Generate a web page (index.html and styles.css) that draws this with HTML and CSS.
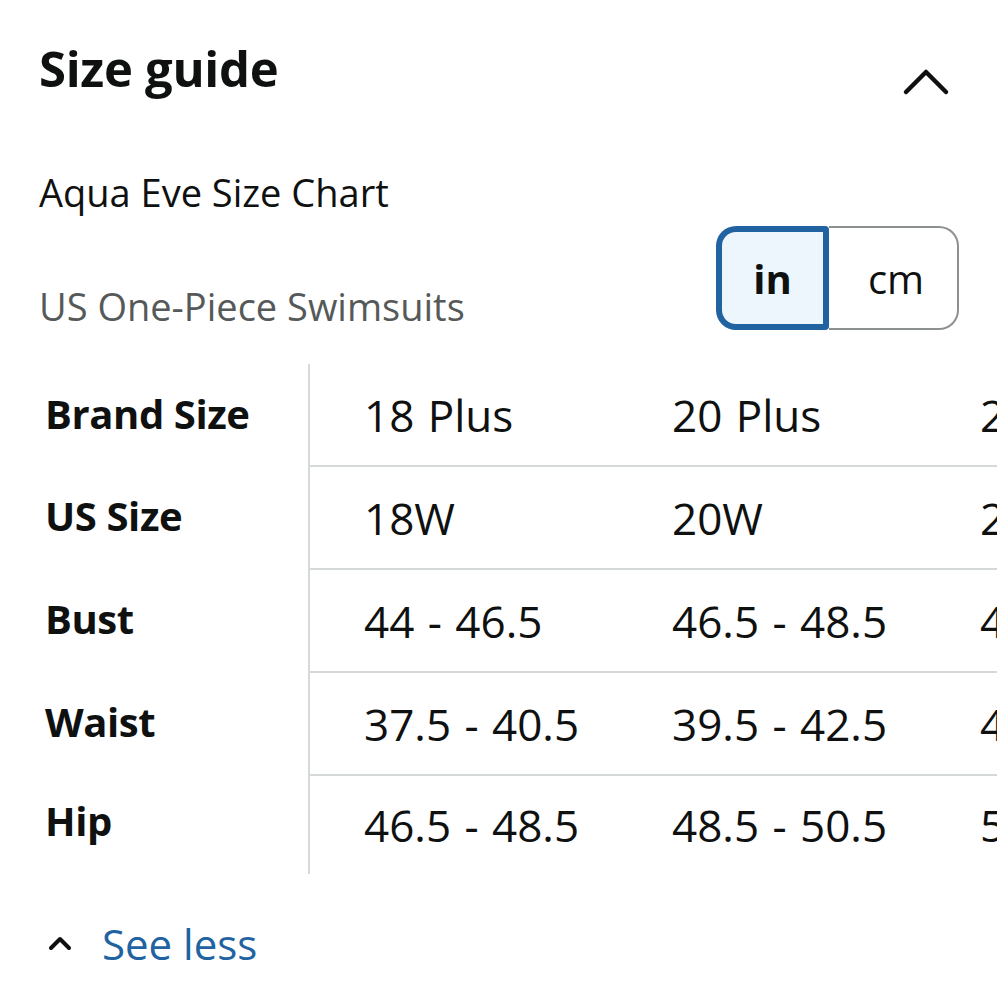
FILE: index.html
```html
<!DOCTYPE html>
<html lang="en">
<head>
<meta charset="utf-8">
<title>Size guide</title>
<link rel="stylesheet" href="styles.css">
</head>
<body>
<main class="panel">
  <header class="header">
    <h1 class="title">Size guide</h1>
    <button class="collapse" aria-label="Collapse">
      <svg width="48" height="30" viewBox="0 0 48 30"><path d="M4 25 L24 5 L44 25" fill="none" stroke="#0f1111" stroke-width="4.5" stroke-linecap="round" stroke-linejoin="round"/></svg>
    </button>
  </header>

  <p class="chart-name">Aqua Eve Size Chart</p>

  <div class="sub-row">
    <p class="subtitle">US One-Piece Swimsuits</p>
    <div class="toggle">
      <span class="seg seg-active">in</span>
      <span class="seg seg-off">cm</span>
    </div>
  </div>

  <div class="table-wrap">
    <div class="table">
      <div class="labels">
        <div class="lab">Brand Size</div>
        <div class="lab">US Size</div>
        <div class="lab">Bust</div>
        <div class="lab">Waist</div>
        <div class="lab">Hip</div>
      </div>
      <div class="data">
        <div class="row"><span class="cell">18 Plus</span><span class="cell">20 Plus</span><span class="cell">22 Plus</span></div>
        <div class="row"><span class="cell">18W</span><span class="cell">20W</span><span class="cell">22W</span></div>
        <div class="row"><span class="cell">44 - 46.5</span><span class="cell">46.5 - 48.5</span><span class="cell">48.5 - 50.5</span></div>
        <div class="row"><span class="cell">37.5 - 40.5</span><span class="cell">39.5 - 42.5</span><span class="cell">41.5 - 44.5</span></div>
        <div class="row"><span class="cell">46.5 - 48.5</span><span class="cell">48.5 - 50.5</span><span class="cell">50.5 - 52.5</span></div>
      </div>
    </div>
  </div>

  <a class="see-less" href="#">
    <svg class="see-chev" width="24" height="16" viewBox="0 0 24 16"><path d="M3 13 L12 4 L21 13" fill="none" stroke="#0f1111" stroke-width="4" stroke-linecap="round" stroke-linejoin="round"/></svg>
    <span>See less</span>
  </a>
</main>
</body>
</html>
```

FILE: styles.css
```css
* { box-sizing: border-box; }
html, body { margin: 0; padding: 0; background: #ffffff; }
body {
  font-family: "Open Sans", "Noto Sans", sans-serif;
  color: #0f1111;
  overflow: hidden;
  width: 997px;
  height: 1000px;
}
.panel {
  padding: 38px 0 0 39px;
}
.header {
  display: flex;
  justify-content: space-between;
  align-items: center;
  height: 60px;
  padding-right: 47px;
}
.title {
  margin: 0;
  font-size: 49px;
  line-height: 60px;
  font-weight: 700;
  letter-spacing: -0.3px;
}
.collapse {
  border: 0;
  background: none;
  padding: 0;
  margin-top: 28px;
  display: block;
}
.collapse svg { display: block; }
.chart-name {
  margin: 72px 0 0 0;
  font-size: 38px;
  line-height: 44px;
}
.sub-row {
  display: flex;
  justify-content: space-between;
  align-items: flex-end;
  margin-top: 12px;
  padding-right: 38px;
}
.subtitle {
  margin: 0 0 2px 0;
  font-size: 38px;
  line-height: 44px;
  color: #565959;
}
.toggle {
  display: flex;
  height: 104px;
}
.seg {
  display: flex;
  align-items: center;
  justify-content: center;
  font-size: 40px;
}
.seg-active {
  width: 113px;
  border: 6px solid #2162a1;
  border-radius: 20px 4px 4px 20px;
  background: #edf6fd;
  font-weight: 700;
}
.seg-off {
  width: 130px;
  border: 2px solid #8d9090;
  border-left: 0;
  border-radius: 0 20px 20px 0;
  background: #ffffff;
  padding-left: 6px;
}
.table-wrap {
  margin-top: 34px;
  margin-left: -39px;
  overflow: hidden;
}
.table {
  display: flex;
  width: max-content;
}
.labels {
  width: 310px;
  padding-left: 45px;
  border-right: 2px solid #d5d9d9;
}
.lab {
  height: 101px;
  display: flex;
  align-items: center;
  font-size: 40px;
  font-weight: 700;
  letter-spacing: -0.4px;
  padding-bottom: 3px;
}
.lab + .lab { height: 103px; }
.lab:last-child { height: 100px; padding-bottom: 8px; }
.row {
  display: flex;
  height: 101px;
}
.row + .row {
  border-top: 2px solid #d5d9d9;
  height: 103px;
}
.row:last-child { height: 100px; }
.cell {
  width: 308px;
  padding-left: 54px;
  display: flex;
  align-items: center;
  font-size: 44px;
  word-spacing: 2px;
}
.see-less {
  display: flex;
  align-items: center;
  margin-top: 44px;
  margin-left: 9px;
  height: 52px;
  text-decoration: none;
  color: #2162a1;
  font-size: 42px;
  line-height: 52px;
}
.see-chev { margin-right: 30px; margin-top: -2px; display: block; }
```
